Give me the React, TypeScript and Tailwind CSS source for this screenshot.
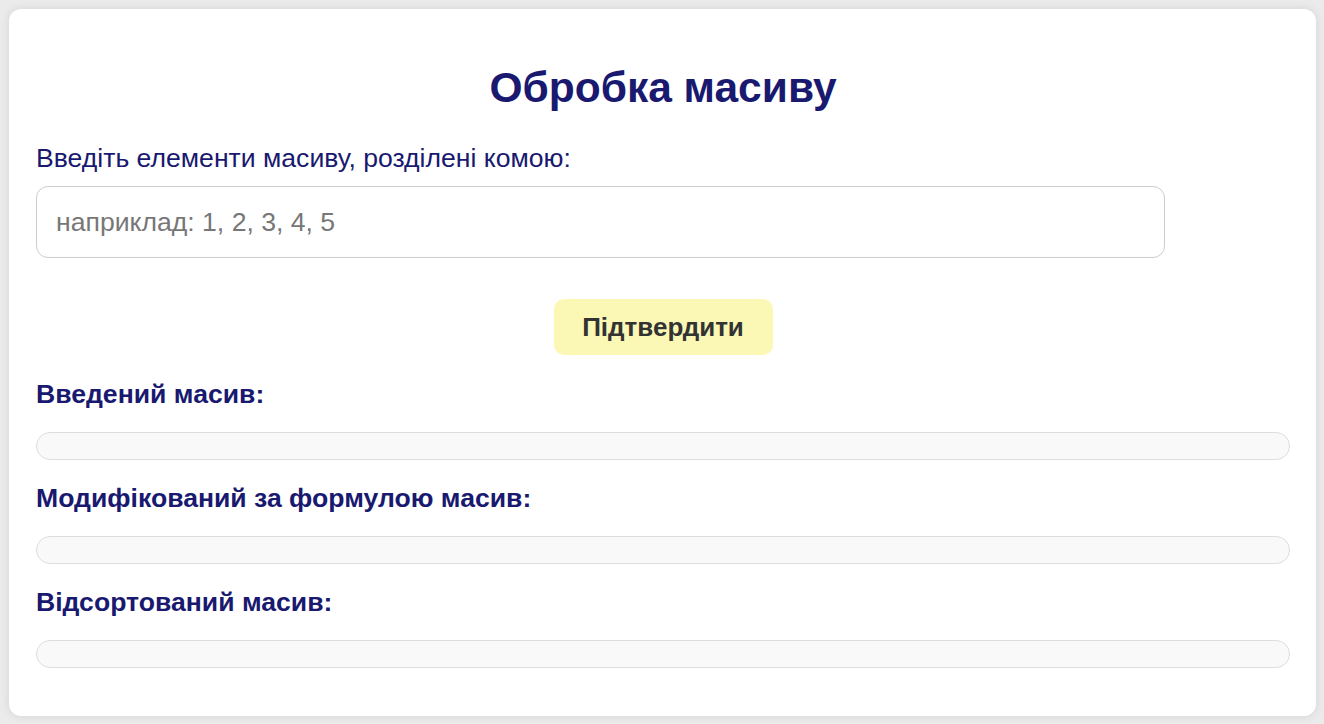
import React, { useState } from 'react'

export default function App() {
  const [input, setInput] = useState('')
  const [original, setOriginal] = useState<number[]>([])
  const [modified, setModified] = useState<number[]>([])
  const [sorted, setSorted] = useState<number[]>([])

  const handleSubmit = () => {
    const arr = input
      .split(',')
      .map((s) => parseFloat(s.trim()))
      .filter((n) => !isNaN(n))
    const mod = arr.map((x) => x * 2 + 1)
    setOriginal(arr)
    setModified(mod)
    setSorted([...mod].sort((a, b) => a - b))
  }

  const sections = [
    { title: 'Введений масив:', data: original },
    { title: 'Модифікований за формулою масив:', data: modified },
    { title: 'Відсортований масив:', data: sorted }
  ]

  return (
    <div className="min-h-screen bg-[#ebebeb] pt-[9px] pl-[9px] pr-[8px] pb-[8px] font-['Liberation_Sans',Arial,sans-serif]">
      <div className="bg-white rounded-[12px] shadow-[0_0_10px_rgba(0,0,0,0.1)] pl-[27px] pr-[26px] pt-[26px] pb-[48px]">
        <h1 className="mt-[29px] text-center text-[42.5px] leading-[48px] font-bold text-[#191970]">
          Обробка масиву
        </h1>

        <label className="block mt-[31px] text-[26.6px] leading-[30px] text-[#191970]">
          Введіть елементи масиву, розділені комою:
        </label>
        <input
          type="text"
          value={input}
          onChange={(e) => setInput(e.target.value)}
          placeholder="наприклад: 1, 2, 3, 4, 5"
          className="block mt-[13px] w-[90%] h-[72px] pl-[19px] pr-[20px] text-[26.6px] border border-[#cccccc] rounded-[12px] outline-none placeholder:text-[#777777]"
        />

        <div className="flex justify-center mt-[41px]">
          <button
            onClick={handleSubmit}
            className="h-[56px] w-[219px] rounded-[10px] bg-[#fbf8b5] text-[26px] font-bold text-[#333333]"
          >
            Підтвердити
          </button>
        </div>

        {sections.map((s, i) => (
          <div key={i} className={i === 0 ? 'mt-[24px]' : 'mt-[23px]'}>
            <h3 className="text-[26.6px] leading-[30px] font-bold text-[#191970]">{s.title}</h3>
            <div className="mt-[23px] min-h-[28px] rounded-full border border-[#dddddd] bg-[#f9f9f9] px-[14px] text-[18px] leading-[26px] text-[#333333]">
              {s.data.join(', ')}
            </div>
          </div>
        ))}
      </div>
    </div>
  )
}
